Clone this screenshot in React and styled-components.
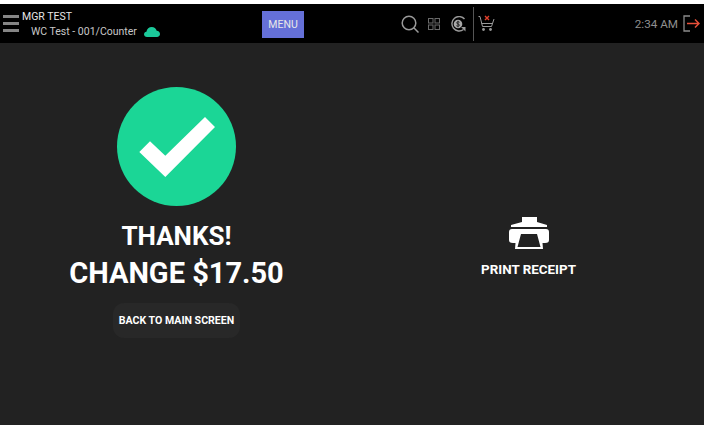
import React from "react"
import styled, { createGlobalStyle } from "styled-components"

const Global = createGlobalStyle`
html, body {
    margin: 0;
    padding: 0;
    background: #222222;
    font-family: Roboto, "Liberation Sans", sans-serif;
}
`

const Page = styled.div`
width: 704px;
height: 425px;
overflow: hidden;
display: flex;
flex-direction: column;
background: #222222;
border-top: 4px solid #ffffff;
box-sizing: border-box;
`

const Header = styled.div`
height: 39px;
flex-shrink: 0;
background: #000000;
display: grid;
grid-template-columns: 262px 42px 1fr auto;
align-items: center;
`

const UserArea = styled.div`
display: flex;
align-items: center;
padding-left: 3px;
`

const Burger = styled.div`
width: 16px;
display: grid;
gap: 4px;
margin-right: 3px;

span {
    display: block;
    height: 3px;
    background: #858585;
}
`

const UserText = styled.div`
display: flex;
flex-direction: column;
padding-top: 1px;
color: #e6e6e6;
font-size: 10.5px;
line-height: 14px;
`

const Station = styled.div`
display: flex;
align-items: center;
gap: 7px;
padding-left: 9px;
margin-top: 1px;
color: #c8c8c8;
`

const MenuButton = styled.div`
height: 27px;
margin-top: 2px;
background: #6570d8;
color: #e8e8e8;
font-size: 10.5px;
display: flex;
align-items: center;
justify-content: center;
`

const Tools = styled.div`
display: flex;
align-items: center;
height: 100%;
padding-left: 96px;
`

const IconGroup = styled.div`
display: flex;
align-items: center;
gap: 9px;
`

const Divider = styled.div`
width: 1px;
height: 34px;
background: #555555;
margin: 0 4px 0 6px;
`

const Clock = styled.div`
display: flex;
align-items: center;
gap: 5px;
padding-right: 4px;
color: #8f8f8f;
font-size: 11.7px;
`

const Content = styled.div`
flex: 1;
display: grid;
grid-template-columns: 353px 1fr;
`

const Left = styled.div`
display: flex;
flex-direction: column;
align-items: center;
padding-top: 44px;
`

const Circle = styled.div`
width: 119px;
height: 119px;
border-radius: 50%;
background: #1bd696;
display: flex;
align-items: center;
justify-content: center;
margin-bottom: 12px;
`

const Thanks = styled.div`
color: #ffffff;
font-size: ${props => props.size}px;
font-weight: 700;
line-height: 37px;
`

const BackButton = styled.div`
margin-top: 11px;
width: 127px;
height: 35px;
border-radius: 11px;
background: #282828;
color: #ffffff;
font-size: 10.6px;
font-weight: 700;
display: flex;
align-items: center;
justify-content: center;
`

const Right = styled.div`
display: flex;
flex-direction: column;
align-items: center;
padding-top: 174px;
`

const PrintLabel = styled.div`
color: #ffffff;
font-size: 13.4px;
font-weight: 700;
margin-top: 13px;
line-height: 15px;
`

const Cloud = () => (
    <svg width="16" height="10" viewBox="0 0 16 10">
        <path fill="#1bc99a" d="M3 10C1.3 10 0 8.8 0 7.3 0 5.900 1 4.900 2.400 4.700 2.900 2 5 0 7.800 0c2.400 0 4.300 1.600 4.900 3.800C14.600 4 16 5.400 16 7.100 16 8.700 14.700 10 13 10Z" />
    </svg>
)

const Search = () => (
    <svg width="19" height="18" viewBox="-1 0 19 18" fill="none" stroke="#9a9a9a" strokeWidth="1.500">
        <circle cx="8" cy="8" r="6.800" />
        <path d="M12.800 12.800l4.700 4.700" />
    </svg>
)

const Grid = () => (
    <svg width="12" height="12" viewBox="0 0 12 12" fill="none" stroke="#6a6a6a" strokeWidth="1">
        <rect x="0.500" y="0.500" width="4.500" height="4.500" />
        <rect x="7" y="0.500" width="4.500" height="4.500" />
        <rect x="0.500" y="7" width="4.500" height="4.500" />
        <rect x="7" y="7" width="4.500" height="4.500" />
    </svg>
)

const Refund = () => (
    <svg width="18" height="16" viewBox="-1 0 18 16" fill="none">
        <path d="M14.500 3A7.200 7.200 0 1 0 13.500 13.500" stroke="#9a9a9a" strokeWidth="1.400" />
        <circle cx="8" cy="8" r="4.300" fill="#a8a8a8" />
        <path d="M9.600 6.300C9 5.600 6.600 5.500 6.600 6.900 6.600 8.300 9.500 7.700 9.500 9.100 9.500 10.500 7 10.400 6.300 9.700M8 4.800V11.200" stroke="#111111" strokeWidth="0.800" />
        <path d="M11 11h4.500v4.500z" fill="#9a9a9a" />
    </svg>
)

const CartIcon = () => (
    <svg width="17" height="17" viewBox="0 0 17 17" fill="none">
        <path d="M0.500 1.500h1.500l2.500 10h9l2.500-7.500" stroke="#9a9a9a" strokeWidth="1" />
        <path d="M3.500 8.500h10.500" stroke="#9a9a9a" strokeWidth="1" />
        <circle cx="5.500" cy="14.500" r="1.400" fill="#9a9a9a" />
        <circle cx="12.500" cy="14.500" r="1.400" fill="#9a9a9a" />
        <path d="M7 1l4 4M11 1l-4 4" stroke="#e2402c" strokeWidth="1.400" />
    </svg>
)

const Logout = () => (
    <svg width="17" height="17" viewBox="0 0 17 17" fill="none">
        <path d="M7 1H1v15h6" stroke="#8a8a8a" strokeWidth="1.300" />
        <path d="M4 8.500h12M12 4.500l4 4-4 4" stroke="#e8503a" strokeWidth="1.500" />
    </svg>
)

const Check = () => (
    <svg width="76" height="60" viewBox="0 0 76 60">
        <path fill="#ffffff" d="M0.300 35L11 24.300L26.300 38.700L66 0L76 10L26.300 60Z" />
    </svg>
)

const Printer = () => (
    <svg width="40" height="32" viewBox="0 0 40 32">
        <path fill="#ffffff" d="M13 0H28V5L38 8V10H2V8L13 5Z" />
        <path fill="#ffffff" fillRule="evenodd" d="M3 12H37C39 12 40 13 40 15V23C40 25 39 26 36 26H33.500L34 32H6L6.500 26H4C1 26 0 25 0 23V15C0 13 1 12 3 12ZM12 17L8.500 30H31.500L28 17Z" />
    </svg>
)

export default function App() {
    return (
        <Page>
            <Global />
            <Header>
                <UserArea>
                    <Burger><span /><span /><span /></Burger>
                    <UserText>
                        <div>MGR TEST</div>
                        <Station>WC Test - 001/Counter <Cloud /></Station>
                    </UserText>
                </UserArea>
                <MenuButton>MENU</MenuButton>
                <Tools>
                    <IconGroup>
                        <Search />
                        <Grid />
                        <Refund />
                    </IconGroup>
                    <Divider />
                    <CartIcon />
                </Tools>
                <Clock>2:34 AM <Logout /></Clock>
            </Header>
            <Content>
                <Left>
                    <Circle><Check /></Circle>
                    <Thanks size={26}>THANKS!</Thanks>
                    <Thanks size={29}>CHANGE $17.50</Thanks>
                    <BackButton>BACK TO MAIN SCREEN</BackButton>
                </Left>
                <Right>
                    <Printer />
                    <PrintLabel>PRINT RECEIPT</PrintLabel>
                </Right>
            </Content>
        </Page>
    )
}
